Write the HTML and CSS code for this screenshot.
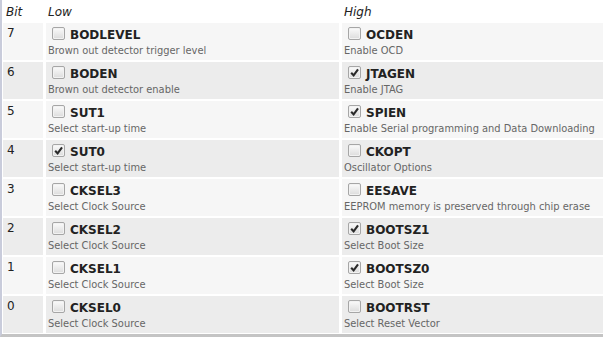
FILE: index.html
```html
<!DOCTYPE html>
<html lang="en">
<head>
  <meta charset="UTF-8">
  <title>Fuse Bits</title>
  <link rel="stylesheet" href="styles.css">
</head>
<body>
  <div class="sheet">
    <div class="fuses">
      <div class="head">Bit</div>
      <div class="head">Low</div>
      <div class="head">High</div>

      <div class="cell bit odd">7</div>
      <div class="cell odd">
        <div class="name"><span class="box"></span>BODLEVEL</div>
        <div class="desc">Brown out detector trigger level</div>
      </div>
      <div class="cell odd">
        <div class="name"><span class="box"></span>OCDEN</div>
        <div class="desc">Enable OCD</div>
      </div>

      <div class="cell bit even">6</div>
      <div class="cell even">
        <div class="name"><span class="box"></span>BODEN</div>
        <div class="desc">Brown out detector enable</div>
      </div>
      <div class="cell even">
        <div class="name"><span class="box on"><svg viewBox="0 0 10 10"><path d="M2 5.2 L4.2 7.6 L8.2 2.2"/></svg></span>JTAGEN</div>
        <div class="desc">Enable JTAG</div>
      </div>

      <div class="cell bit odd">5</div>
      <div class="cell odd">
        <div class="name"><span class="box"></span>SUT1</div>
        <div class="desc">Select start-up time</div>
      </div>
      <div class="cell odd">
        <div class="name"><span class="box on"><svg viewBox="0 0 10 10"><path d="M2 5.2 L4.2 7.6 L8.2 2.2"/></svg></span>SPIEN</div>
        <div class="desc">Enable Serial programming and Data Downloading</div>
      </div>

      <div class="cell bit even">4</div>
      <div class="cell even">
        <div class="name"><span class="box on"><svg viewBox="0 0 10 10"><path d="M2 5.2 L4.2 7.6 L8.2 2.2"/></svg></span>SUT0</div>
        <div class="desc">Select start-up time</div>
      </div>
      <div class="cell even">
        <div class="name"><span class="box"></span>CKOPT</div>
        <div class="desc">Oscillator Options</div>
      </div>

      <div class="cell bit odd">3</div>
      <div class="cell odd">
        <div class="name"><span class="box"></span>CKSEL3</div>
        <div class="desc">Select Clock Source</div>
      </div>
      <div class="cell odd">
        <div class="name"><span class="box"></span>EESAVE</div>
        <div class="desc">EEPROM memory is preserved through chip erase</div>
      </div>

      <div class="cell bit even">2</div>
      <div class="cell even">
        <div class="name"><span class="box"></span>CKSEL2</div>
        <div class="desc">Select Clock Source</div>
      </div>
      <div class="cell even">
        <div class="name"><span class="box on"><svg viewBox="0 0 10 10"><path d="M2 5.2 L4.2 7.6 L8.2 2.2"/></svg></span>BOOTSZ1</div>
        <div class="desc">Select Boot Size</div>
      </div>

      <div class="cell bit odd">1</div>
      <div class="cell odd">
        <div class="name"><span class="box"></span>CKSEL1</div>
        <div class="desc">Select Clock Source</div>
      </div>
      <div class="cell odd">
        <div class="name"><span class="box on"><svg viewBox="0 0 10 10"><path d="M2 5.2 L4.2 7.6 L8.2 2.2"/></svg></span>BOOTSZ0</div>
        <div class="desc">Select Boot Size</div>
      </div>

      <div class="cell bit even">0</div>
      <div class="cell even">
        <div class="name"><span class="box"></span>CKSEL0</div>
        <div class="desc">Select Clock Source</div>
      </div>
      <div class="cell even">
        <div class="name"><span class="box"></span>BOOTRST</div>
        <div class="desc">Select Reset Vector</div>
      </div>
    </div>
  </div>
</body>
</html>
```

FILE: styles.css
```css
body {
  margin: 0;
  font-family: "DejaVu Sans", Verdana, sans-serif;
  background: #ffffff;
  color: #222;
  overflow: hidden;
}
.sheet {
  border-left: 2px solid #c9ccdb;
  border-bottom: 3px solid #c4c4c4;
  padding-left: 1px;
  padding-bottom: 1px;
}
.fuses {
  display: grid;
  grid-template-columns: 40px 293px 1fr;
  grid-template-rows: 21px;
  grid-auto-rows: 37px;
  column-gap: 3px;
  row-gap: 2px;
}
.head {
  font-style: italic;
  font-size: 12px;
  line-height: 14px;
  padding: 5px 0 0 2px;
  color: #222;
}
.head:first-child {
  padding-left: 3px;
}
.cell {
  padding: 5px 2px 0 2px;
}
.odd {
  background: #f6f6f6;
}
.even {
  background: #ececec;
}
.bit {
  font-size: 12px;
  line-height: 14px;
  padding: 3px 0 0 4px;
}
.name {
  display: flex;
  align-items: flex-start;
  font-weight: bold;
  font-size: 12px;
  line-height: 14px;
  color: #222;
}
.box {
  width: 11px;
  height: 11px;
  margin: -1px 5px 0 4px;
  border: 1px solid #a6a6a6;
  border-radius: 2px;
  background: linear-gradient(#fbfbfb, #dcdcdc);
  box-shadow: inset 0 0 0 1px #f2f2f2;
}
.box svg {
  display: block;
  width: 11px;
  height: 11px;
  fill: none;
  stroke: #2a2a2a;
  stroke-width: 1.9;
}
.desc {
  margin-top: 2px;
  font-size: 9.9px;
  line-height: 13px;
  color: #666;
  white-space: nowrap;
}
```
